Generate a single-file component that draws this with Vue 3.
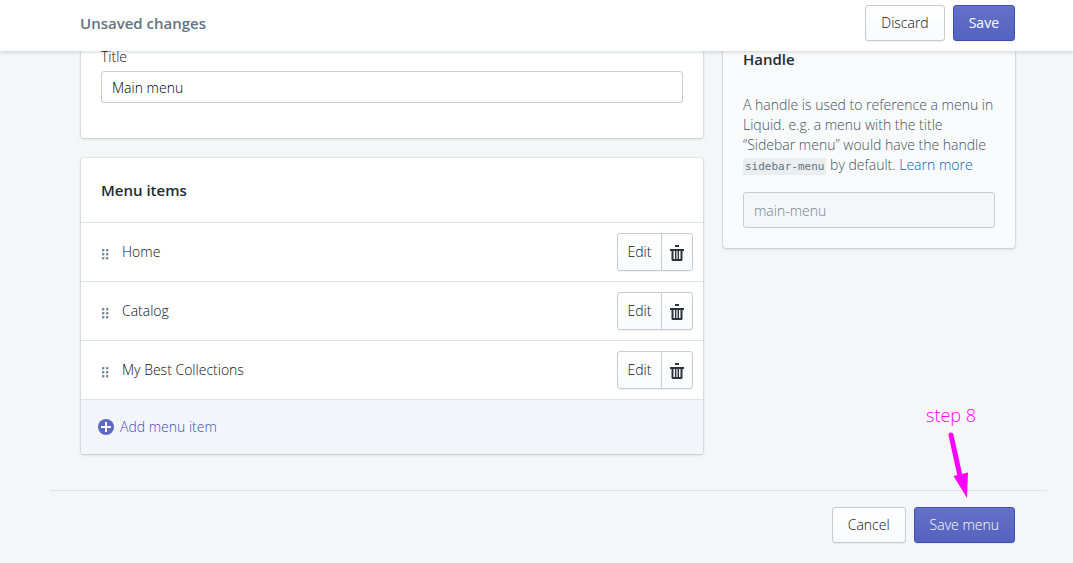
<script setup>
import { ref } from 'vue'

const title = ref('Main menu')
const items = ref(['Home', 'Catalog', 'My Best Collections'])
</script>

<template>
  <div class="page">
    <header class="bar">
      <h1 class="bar-title">Unsaved changes</h1>
      <div class="actions">
        <button type="button" class="btn">Discard</button>
        <button type="button" class="btn primary">Save</button>
      </div>
    </header>

    <main class="columns">
      <div class="primary-col">
        <section class="card title-card">
          <label for="menu-title" class="label">Title</label>
          <input id="menu-title" v-model="title" class="field" type="text" />
        </section>

        <section class="card">
          <h2 class="heading items-heading">Menu items</h2>
          <ul class="items">
            <li v-for="item in items" :key="item" class="item">
              <svg class="grip" width="8" height="12" viewBox="0 0 8 12" aria-hidden="true">
                <g fill="#798c9c">
                  <rect x="1" y="1" width="2.400" height="2.400" rx=".6" /><rect x="5" y="1" width="2.400" height="2.400" rx=".6" />
                  <rect x="1" y="5" width="2.400" height="2.400" rx=".6" /><rect x="5" y="5" width="2.400" height="2.400" rx=".6" />
                  <rect x="1" y="9" width="2.400" height="2.400" rx=".6" /><rect x="5" y="9" width="2.400" height="2.400" rx=".6" />
                </g>
              </svg>
              <span class="item-name">{{ item }}</span>
              <div class="group">
                <button type="button" class="btn edit">Edit</button>
                <button type="button" class="btn trash" :aria-label="'Delete ' + item">
                  <svg width="14" height="16" viewBox="0 0 14 16" fill="#2b323a" aria-hidden="true">
                    <path d="M5 0h4v2H5zM0 4h14v2h-1.500v8.500q0 1.500-1.500 1.500H3q-1.500 0-1.500-1.500V6H0zM3.500 6v8H5V6zM6.400 6v8h1.200V6zM9 6v8h1.500V6z" fill-rule="evenodd" />
                  </svg>
                </button>
              </div>
            </li>
          </ul>
          <button type="button" class="add">
            <svg width="16" height="16" viewBox="0 0 16 16" aria-hidden="true">
              <circle cx="8" cy="8" r="8" fill="#5c6ac4" />
              <path d="M8 3v10M3 8h10" stroke="#fff" stroke-width="2" />
            </svg>
            <span>Add menu item</span>
          </button>
        </section>
      </div>

      <aside class="card side">
        <h2 class="heading">Handle</h2>
        <p class="help">
          A handle is used to reference a menu in<br />
          Liquid. e.g. a menu with the title<br />
          “Sidebar menu” would have the handle<br />
          <code>sidebar-menu</code> by default. <a href="#">Learn more</a>
        </p>
        <input class="field handle" type="text" placeholder="main-menu" aria-label="Handle" disabled />
      </aside>
    </main>

    <footer class="foot">
      <button type="button" class="btn">Cancel</button>
      <div class="target">
        <button type="button" class="btn primary">Save menu</button>
        <div class="note">
          <span>step 8</span>
          <svg width="26" height="68" viewBox="0 0 26 68" aria-hidden="true">
            <path d="M8 5 17 46" stroke="#f0f" stroke-width="5" stroke-linecap="round" />
            <path d="M10.500 46 25 42.500 24 68z" fill="#f0f" />
          </svg>
        </div>
      </div>
    </footer>
  </div>
</template>

<style>
body {
  background: #f4f6f8;
}
</style>

<style scoped>
.page {
  min-height: 100vh;
  font: 300 14px/20px "Open Sans", "Noto Sans", sans-serif;
  color: #0b1118;
}
.page * {
  box-sizing: border-box;
}
h1, h2, p, ul {
  margin: 0;
  padding: 0;
}
button, input {
  font: inherit;
  color: inherit;
}
.bar {
  position: sticky;
  top: 0;
  z-index: 2;
  display: flex;
  justify-content: space-between;
  align-items: center;
  padding: 5px 58px 10px 80px;
  background: #fff;
  box-shadow: 0 1px 4px rgba(33, 43, 54, 0.2);
}
.bar-title {
  font-size: 15px;
  line-height: 24px;
  font-weight: 600;
  color: #637381;
}
.actions {
  display: flex;
  gap: 8px;
}
.btn {
  height: 36px;
  padding: 0 15px;
  border: 1px solid #c4cdd5;
  border-radius: 3px;
  background: linear-gradient(#fff, #f9fafb);
  box-shadow: 0 1px 0 rgba(22, 29, 37, 0.05);
  white-space: nowrap;
}
.primary {
  border-color: #3f4eae;
  background: linear-gradient(#6371c7, #5563c1);
  box-shadow: inset 0 1px 0 #6774c8, 0 1px 0 rgba(22, 29, 37, 0.05);
  color: #fff;
}
.bar .primary {
  padding: 0 15px;
  font-weight: 400;
}
.columns {
  display: flex;
  align-items: flex-start;
  gap: 20px;
  margin-top: -24px;
  padding: 0 58px 0 81px;
}
.primary-col {
  flex: 1;
  display: flex;
  flex-direction: column;
  gap: 20px;
}
.card {
  border-radius: 3px;
  background: #fff;
  box-shadow: 0 0 0 1px rgba(63, 63, 68, 0.08), 0 1px 3px rgba(63, 63, 68, 0.2);
}
.title-card {
  padding: 20px 20px 35px;
}
.label {
  display: block;
  margin-bottom: 4px;
}
.field {
  display: block;
  width: 100%;
  height: 32px;
  padding: 0 10px;
  border: 1px solid #c4cdd5;
  border-radius: 3px;
  background: #fff;
  color: #000;
}
.heading {
  font-size: 15px;
  line-height: 24px;
  font-weight: 600;
  color: #212b36;
}
.items-heading {
  padding: 20px;
}
.items {
  list-style: none;
}
.item {
  display: flex;
  align-items: center;
  height: 59px;
  padding: 0 10px 0 20px;
  border-top: 1px solid #dfe3e8;
}
.grip {
  margin-top: 4px;
}
.item-name {
  flex: 1;
  margin-left: 13px;
}
.group {
  display: flex;
}
.edit {
  width: 45px;
  height: 38px;
  padding: 0;
  border-radius: 3px 0 0 3px;
}
.trash {
  display: flex;
  align-items: center;
  width: 32px;
  height: 38px;
  margin-left: -1px;
  padding: 2px 8px 0;
  border-radius: 0 3px 3px 0;
}
.add {
  display: flex;
  align-items: center;
  gap: 6px;
  width: 100%;
  height: 55px;
  padding: 0 17px;
  border: 0;
  border-top: 1px solid #dfe3e8;
  border-radius: 0 0 3px 3px;
  background: #f4f5fa;
  color: #4150b4;
}
.side {
  flex: 0 0 292px;
  min-width: 0;
  padding: 20px;
  background: #f9fafb;
}
.help {
  margin: 24px 0 17px;
  color: #42525f;
  white-space: nowrap;
}
code {
  padding: 2px;
  background: #ebeef0;
  color: #637381;
  font: 11px/16px "DejaVu Sans Mono", monospace;
}
a {
  color: #0062b8;
  text-decoration: none;
}
.handle {
  height: 36px;
  background: #f4f6f8;
}
.handle::placeholder {
  color: #74828f;
  opacity: 1;
}
.foot {
  display: flex;
  justify-content: flex-end;
  gap: 8px;
  margin: 36px 26px 0 50px;
  padding: 16px 32px 20px;
  border-top: 1px solid #dfe3e8;
}
.target {
  position: relative;
}
.note {
  position: absolute;
  right: 39px;
  bottom: 45px;
  display: flex;
  flex-direction: column;
  gap: 3px;
  color: #f0f;
  font-size: 18px;
  line-height: 24px;
  white-space: nowrap;
}
.note svg {
  margin-left: 17px;
}
</style>
